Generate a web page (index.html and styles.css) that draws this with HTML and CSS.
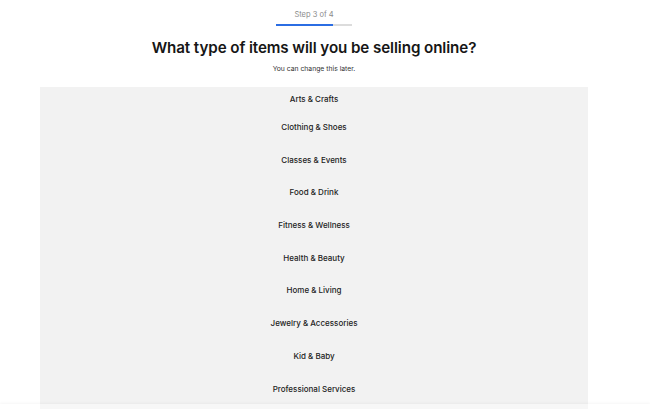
FILE: index.html
```html
<!DOCTYPE html>
<html>
<head>
	<title>Choose category</title>
	<link rel="stylesheet" href="styles.css">
</head>
<body>
	<div class="sayfa">
		<div class="adim">
			<div class="adimYazi">Step 3 of 4</div>
			<div class="cubuk"><span class="dolu"></span></div>
		</div>

		<h1 class="baslik">What type of items will you be selling online?</h1>
		<p class="altBaslik">You can change this later.</p>

		<ul class="liste">
			<li>Arts &amp; Crafts</li>
			<li>Clothing &amp; Shoes</li>
			<li>Classes &amp; Events</li>
			<li>Food &amp; Drink</li>
			<li>Fitness &amp; Wellness</li>
			<li>Health &amp; Beauty</li>
			<li>Home &amp; Living</li>
			<li>Jewelry &amp; Accessories</li>
			<li>Kid &amp; Baby</li>
			<li>Professional Services</li>
		</ul>
	</div>
	<div class="altCizgi"></div>
</body>
</html>
```

FILE: styles.css
```css
body {
	margin: 0;
	background-color: #ffffff;
	font-family: Inter, "Noto Sans", sans-serif;
	color: #1f1f1f;
	overflow: hidden;
}

.sayfa {
	width: 548px;
	margin-left: 40px;
	display: flex;
	flex-direction: column;
	align-items: center;
}

.adim {
	display: flex;
	flex-direction: column;
	align-items: center;
	padding-top: 10px;
}

.adimYazi {
	font-size: 7.5px;
	color: #8a8a8a;
	line-height: 9px;
}

.cubuk {
	margin-top: 5px;
	width: 76px;
	height: 2px;
	background-color: #dcdcdc;
}

.dolu {
	display: block;
	width: 57px;
	height: 2px;
	background-color: #2b6de3;
}

.baslik {
	margin: 11px 0 0 0;
	font-size: 15.2px;
	font-weight: 600;
	line-height: 22px;
	letter-spacing: -0.1px;
	color: #161616;
}

.altBaslik {
	margin: 5px 0 0 0;
	font-size: 6.8px;
	line-height: 9px;
	color: #333333;
}

.liste {
	list-style: none;
	margin: 14px 0 0 0;
	padding: 0;
	width: 100%;
	height: 330px;
	background-color: #f2f2f2;
}

.liste li {
	text-align: center;
	font-size: 8px;
	font-weight: 500;
	height: 32.7px;
	line-height: 32.7px;
	color: #222222;
}

.liste li:first-child {
	height: 24px;
	line-height: 24px;
}

.altCizgi {
	position: fixed;
	left: 0;
	right: 0;
	bottom: 0;
	height: 5px;
	background-color: rgba(255, 255, 255, 0.4);
	box-shadow: 0 -1px 3px rgba(0, 0, 0, 0.04);
}
```
